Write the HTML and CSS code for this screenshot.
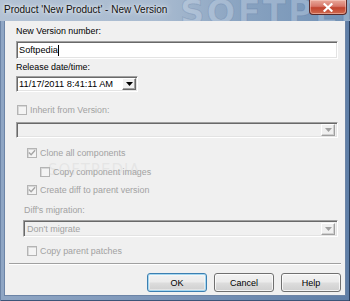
FILE: index.html
```html
<!DOCTYPE html>
<html>
<head>
<meta charset="utf-8">
<link rel="stylesheet" href="styles.css">
</head>
<body>
<div class="window">
  <div class="titlebar">
    <span class="title">Product 'New Product' - New Version</span>
    <span class="watermark">SOFTPEDIA</span>
    <div class="close">
      <svg width="10" height="9" viewBox="0 0 10 9"><path d="M1.5 1.2 L8.5 7.8 M8.5 1.2 L1.5 7.8" stroke="#fff" stroke-width="2.2" stroke-linecap="square"/></svg>
    </div>
  </div>
  <div class="client">
    <div class="label l1">New Version number:</div>
    <div class="textbox">Softpedia<span class="caret"></span></div>
    <div class="label l2">Release date/time:</div>
    <div class="datepicker">
      <span class="dp-text">11/17/2011 8:41:11 AM</span>
      <span class="dp-btn"><svg width="7" height="4" viewBox="0 0 7 4"><path d="M0 0 H7 L3.5 4 Z" fill="#000"/></svg></span>
    </div>
    <div class="check disabled r-inherit"><span class="box"></span><span>Inherit from Version:</span></div>
    <div class="combo c1"><span class="combo-btn"><svg width="7" height="4" viewBox="0 0 7 4"><path d="M0 0 H7 L3.5 4 Z" fill="#a0a0a0"/></svg></span></div>
    <div class="group">
      <div class="check disabled r-clone"><span class="box checked"><svg width="8" height="8" viewBox="0 0 9 9"><path d="M1 4 L3.5 6.5 L8 1.5" fill="none" stroke="#a6a6a6" stroke-width="1.6"/></svg></span><span>Clone all components</span></div>
      <div class="check disabled r-copy"><span class="box"></span><span>Copy component images</span><span class="wm2">SOFTPEDIA</span></div>
      <div class="check disabled r-diff"><span class="box checked"><svg width="8" height="8" viewBox="0 0 9 9"><path d="M1 4 L3.5 6.5 L8 1.5" fill="none" stroke="#a6a6a6" stroke-width="1.6"/></svg></span><span>Create diff to parent version</span></div>
    </div>
    <div class="label disabled-text l3">Diff's migration:</div>
    <div class="combo c2"><span class="combo-text">Don't migrate</span><span class="combo-btn"><svg width="7" height="4" viewBox="0 0 7 4"><path d="M0 0 H7 L3.5 4 Z" fill="#a0a0a0"/></svg></span></div>
    <div class="check disabled r-patch"><span class="box"></span><span>Copy parent patches</span></div>
    <div class="separator"></div>
    <div class="buttons">
      <div class="btn default">OK</div>
      <div class="btn">Cancel</div>
      <div class="btn">Help</div>
    </div>
  </div>
</div>
</body>
</html>
```

FILE: styles.css
```css
* { box-sizing: border-box; }
html, body { margin: 0; padding: 0; }
body {
  width: 350px;
  height: 301px;
  overflow: hidden;
  font-family: "Liberation Sans", Arial, sans-serif;
  font-size: 8.9px;
  color: #000;
  background: #fff;
}
.window {
  width: 350px;
  height: 301px;
  display: flex;
  flex-direction: column;
  padding: 0 4px 5px 4px;
  background: linear-gradient(90deg, #8fa6c4 0%, #7f98ba 40%, #5f7ea6 100%);
  box-shadow: inset -1px 0 0 #2a3e5c, inset 1px 0 0 #6c84a6, inset 0 -1px 0 #3d5478;
}
.titlebar {
  position: relative;
  height: 21px;
  flex: none;
  margin: 0 -4px;
  padding-left: 4px;
  display: flex;
  align-items: center;
  background: linear-gradient(90deg, #b3c2d4 0%, #a9bbd0 45%, #88a2c0 70%, #7191b5 100%);
  overflow: hidden;
}
.title {
  position: relative;
  z-index: 2;
  font-family: "Liberation Sans", Arial, sans-serif;
  font-size: 10px;
  color: #111;
  text-shadow: 0 0 6px rgba(255,255,255,0.9), 0 0 3px rgba(255,255,255,0.8);
  padding-bottom: 2px;
}
.watermark {
  position: absolute;
  left: 180px;
  top: -8px;
  font-family: "DejaVu Sans", sans-serif;
  font-weight: bold;
  font-size: 34px;
  letter-spacing: 2px;
  color: rgba(225,235,248,0.28);
  -webkit-text-stroke: 1px rgba(50,80,130,0.18);
  z-index: 1;
}
.close {
  position: absolute;
  right: 3px;
  top: 0;
  width: 38px;
  height: 15px;
  z-index: 3;
  border: 1px solid #5a2a2a;
  border-top: none;
  border-radius: 0 0 4px 4px;
  background: linear-gradient(180deg, #e9a99b 0%, #d7776a 45%, #c1432f 55%, #cf6a4e 100%);
  box-shadow: inset 0 0 0 1px rgba(255,220,210,0.45);
  display: flex;
  align-items: center;
  justify-content: center;
}
.client {
  flex: 1;
  background: #f0f0f0;
  border: 1px solid #6c84a6;
  border-top: none;
  padding: 0 7px 0 11px;
  display: flex;
  flex-direction: column;
  align-items: flex-start;
}
.label {
  height: 12px;
  line-height: 12px;
  white-space: nowrap;
}
.l1 { margin-top: 4px; }
.textbox {
  margin-top: 4px;
  width: 322px;
  height: 18px;
  background: #fff;
  border-top: 1px solid #a0a0a0;
  border-left: 1px solid #a0a0a0;
  border-right: 1px solid #fff;
  border-bottom: 1px solid #fff;
  box-shadow: inset 1px 1px 0 #696969, inset -1px -1px 0 #e3e3e3;
  padding: 2px 2px;
  font-size: 9.2px;
  line-height: 12px;
  display: flex;
  align-items: center;
}
.caret {
  display: inline-block;
  width: 1px;
  height: 11px;
  background: #000;
}
.l2 { margin-top: 2px; }
.datepicker {
  margin-top: 3px;
  width: 122px;
  height: 16px;
  background: #fff;
  border-top: 1px solid #a0a0a0;
  border-left: 1px solid #a0a0a0;
  border-right: 1px solid #fff;
  border-bottom: 1px solid #fff;
  box-shadow: inset 1px 1px 0 #696969, inset -1px -1px 0 #e3e3e3;
  display: flex;
  align-items: center;
  padding: 1px 1px 1px 2px;
}
.dp-text { flex: 1; white-space: nowrap; font-size: 9.3px; line-height: 12px; }
.dp-btn, .combo-btn {
  width: 14px;
  height: 12px;
  flex: none;
  background: #f0f0f0;
  border-top: 1px solid #fff;
  border-left: 1px solid #fff;
  border-right: 1px solid #696969;
  border-bottom: 1px solid #696969;
  box-shadow: inset -1px -1px 0 #a0a0a0;
  display: flex;
  align-items: center;
  justify-content: center;
}
.check {
  display: flex;
  align-items: center;
  height: 12px;
  white-space: nowrap;
  position: relative;
}
.check .box {
  width: 10px;
  height: 10px;
  margin-right: 3px;
  background: #f4f4f4;
  border: 1px solid #b4b4b4;
  box-shadow: inset 1px 1px 0 #d8d8d8;
  display: flex;
  align-items: center;
  justify-content: center;
}
.disabled, .disabled-text { color: #a2a2a2; }
.r-inherit { margin-top: 12px; margin-left: 1px; }
.combo {
  width: 322px;
  height: 16px;
  background: #f0f0f0;
  border-top: 1px solid #a0a0a0;
  border-left: 1px solid #a0a0a0;
  border-right: 1px solid #fff;
  border-bottom: 1px solid #fff;
  box-shadow: inset 1px 1px 0 #696969, inset -1px -1px 0 #e3e3e3;
  display: flex;
  align-items: center;
  padding: 1px 2px;
}
.combo .combo-btn { margin-left: auto; border-right-color: #a0a0a0; border-bottom-color: #a0a0a0; box-shadow: inset -1px -1px 0 #d0d0d0; }
.c1 { margin-top: 6px; }
.group {
  padding-left: 11px;
  display: flex;
  flex-direction: column;
}
.r-clone { margin-top: 9px; }
.r-copy { margin-top: 7px; margin-left: 13px; }
.r-diff { margin-top: 6px; }
.wm2 {
  position: absolute;
  left: 8px;
  top: -5px;
  font-family: "DejaVu Sans", sans-serif;
  font-size: 15px;
  letter-spacing: 1px;
  color: rgba(190,190,190,0.22);
}
.l3 { margin-top: 8px; margin-left: 8px; }
.c2 {
  margin-top: 4px;
  margin-left: 7px;
  width: 315px;
  height: 17px;
  color: #a2a2a2;
}
.combo-text { padding-left: 1px; font-size: 9px; line-height: 12px; }
.r-patch { margin-top: 8px; margin-left: 11px; }
.separator {
  margin-top: 6px;
  margin-left: -7px;
  width: 332px;
  height: 2px;
  border-top: 1px solid #a0a0a0;
  border-bottom: 1px solid #fff;
}
.buttons {
  margin-top: 8px;
  align-self: flex-end;
  display: flex;
  gap: 7px;
  margin-right: -3px;
}
.btn {
  width: 60px;
  height: 19px;
  border: 1px solid #707070;
  border-radius: 3px;
  background: linear-gradient(180deg, #f2f2f2 0%, #ebebeb 48%, #dddddd 52%, #cfcfcf 100%);
  box-shadow: inset 0 0 0 1px rgba(255,255,255,0.75);
  display: flex;
  align-items: center;
  justify-content: center;
  font-size: 9px;
  line-height: 12px;
}
.btn.default {
  border-color: #3c7fb1;
  box-shadow: inset 0 0 0 1px #a6d7f0, inset 0 0 0 2px rgba(255,255,255,0.4);
}
```
